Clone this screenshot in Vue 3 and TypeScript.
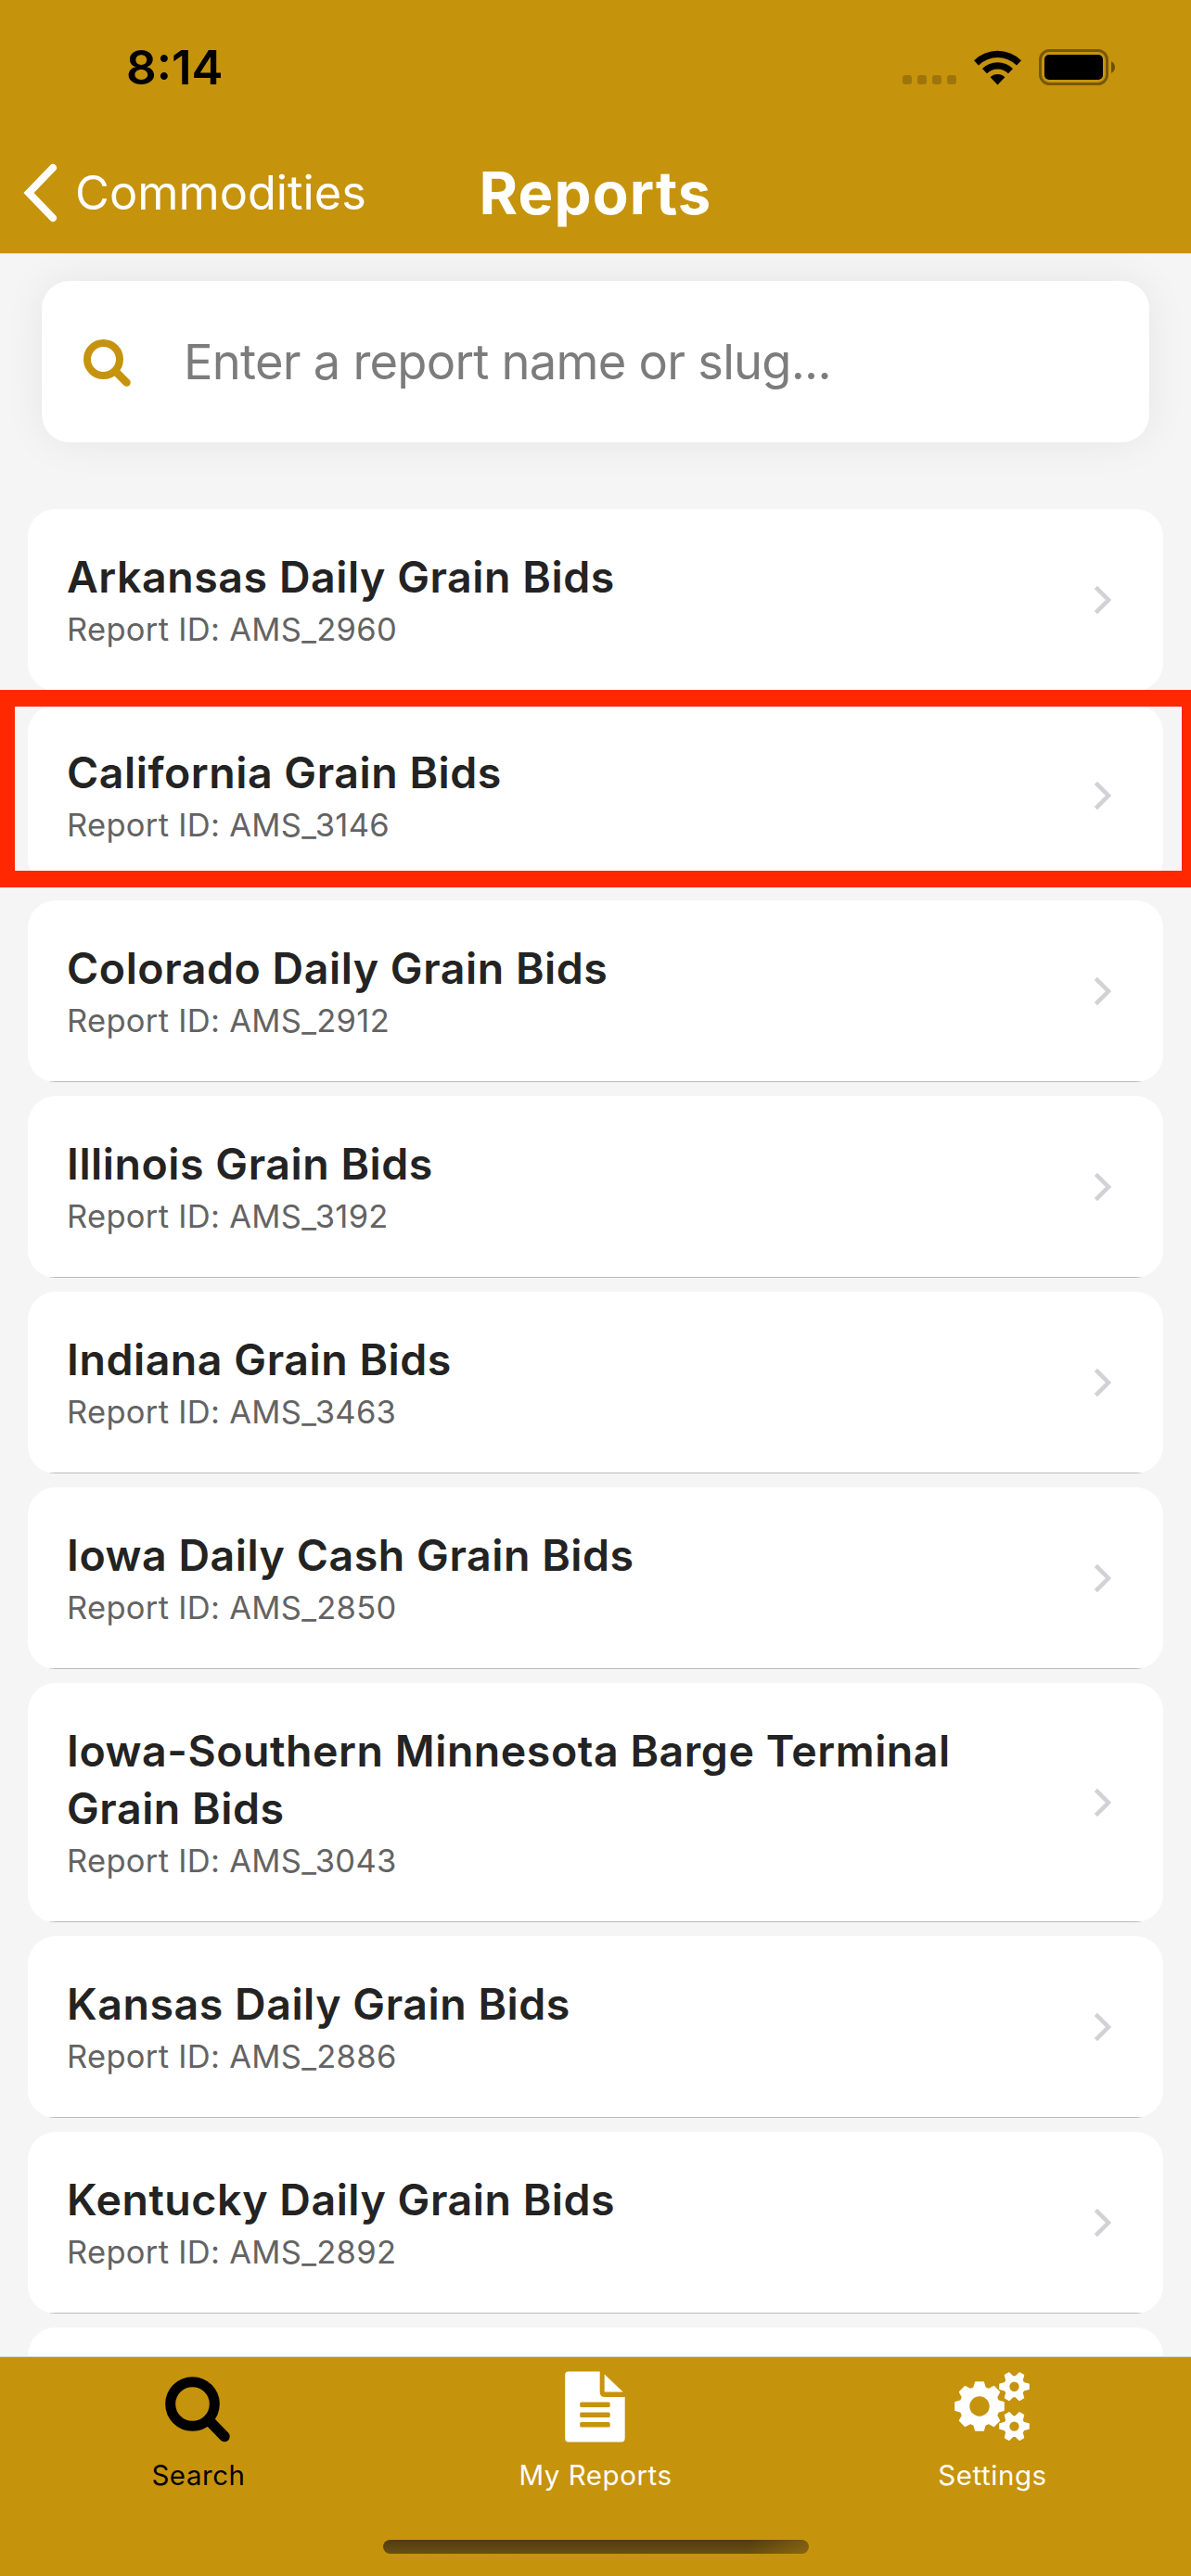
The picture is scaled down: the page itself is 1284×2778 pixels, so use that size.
<script setup lang="ts">
interface Report {
  name: string
  slug: string
  selected?: boolean
}

const reports: Report[] = [
  { name: 'Arkansas Daily Grain Bids', slug: 'AMS_2960' },
  { name: 'California Grain Bids', slug: 'AMS_3146', selected: true },
  { name: 'Colorado Daily Grain Bids', slug: 'AMS_2912' },
  { name: 'Illinois Grain Bids', slug: 'AMS_3192' },
  { name: 'Indiana Grain Bids', slug: 'AMS_3463' },
  { name: 'Iowa Daily Cash Grain Bids', slug: 'AMS_2850' },
  { name: 'Iowa-Southern Minnesota Barge Terminal Grain Bids', slug: 'AMS_3043' },
  { name: 'Kansas Daily Grain Bids', slug: 'AMS_2886' },
  { name: 'Kentucky Daily Grain Bids', slug: 'AMS_2892' },
]

/** Outline of a cog with a round hole; angles in radians, widths in pixels. */
function cog(
  cx: number,
  cy: number,
  outer: number,
  inner: number,
  hole: number,
  teeth: number,
  baseHalf: number,
  tipHalf: number,
): string {
  const points: string[] = []
  for (let i = 0; i < teeth; i++) {
    const a = (i * 2 * Math.PI) / teeth
    const corners = [
      [inner, -baseHalf],
      [outer, -tipHalf],
      [outer, tipHalf],
      [inner, baseHalf],
    ]
    for (const [r, t] of corners) {
      const x = cx + r * Math.cos(a) - t * Math.sin(a)
      const y = cy + r * Math.sin(a) + t * Math.cos(a)
      points.push(`${x.toFixed(2)} ${y.toFixed(2)}`)
    }
  }
  const ring = `M${cx - hole} ${cy}a${hole} ${hole} 0 1 0 ${hole * 2} 0a${hole} ${hole} 0 1 0 ${-hole * 2} 0Z`
  return `M${points.join('L')}Z${ring}`
}

const cogs: string[] = [
  cog(27, 45, 26, 20, 11.5, 8, 6, 4.2),
  cog(64.5, 23.7, 15.5, 10, 6, 6, 4, 2.5),
  cog(64.5, 66.6, 15.5, 10, 6, 6, 4, 2.5),
]
</script>

<template>
  <div class="screen">
    <header class="header">
      <div class="status">
        <span class="time">8:14</span>
        <div class="indicators">
          <div class="dots"><i v-for="n in 4" :key="n"></i></div>
          <svg class="wifi" width="51" height="38" viewBox="0 0 51 38">
            <path d="M0 11.2A36.5 36.5 0 0 1 51 11.2L46 16.4A29.2 29.2 0 0 0 5 16.4Z" />
            <path d="M9 20A23.6 23.6 0 0 1 42 20L37 25.2A16.4 16.4 0 0 0 14 25.2Z" />
            <path d="M17.6 29.3A11.2 11.2 0 0 1 33.4 29.3L25.5 37.5Z" />
          </svg>
          <svg class="battery" width="83" height="39" viewBox="0 0 83 39">
            <rect x="1.5" y="1.5" width="72" height="36" rx="10" fill="none" stroke="#000" stroke-opacity=".4" stroke-width="3" />
            <rect x="6" y="6" width="63" height="27" rx="5" />
            <path d="M78 13.3C80.5 14.3 82 16.7 82 19.5C82 22.3 80.5 24.7 78 25.7Z" fill-opacity=".45" />
          </svg>
        </div>
      </div>
      <nav class="nav">
        <div class="back">
          <svg width="38" height="64" viewBox="0 0 38 64">
            <path d="M33 5L7 32L33 59" fill="none" stroke="#fff" stroke-width="8" stroke-linecap="round" stroke-linejoin="miter" />
          </svg>
          <span>Commodities</span>
        </div>
        <h1>Reports</h1>
        <div class="side"></div>
      </nav>
    </header>

    <main class="content">
      <div class="search">
        <svg width="52" height="52" viewBox="0 0 52 52" fill="none" stroke="#c6930d">
          <circle cx="21.5" cy="21.5" r="17.5" stroke-width="8" />
          <path d="M35 35L46.5 46.5" stroke-width="8.5" stroke-linecap="round" />
        </svg>
        <span>Enter a report name or slug...</span>
      </div>

      <ul class="list">
        <li v-for="report in reports" :key="report.slug" class="item">
          <div class="card">
            <div class="text">
              <h2>{{ report.name }}</h2>
              <p>Report ID: {{ report.slug }}</p>
            </div>
            <svg width="20" height="32" viewBox="0 0 20 32">
              <path d="M2.4 2.4L16 16L2.4 29.6" fill="none" stroke="#d1d1d6" stroke-width="4.5" />
            </svg>
          </div>
          <div v-if="report.selected" class="highlight"></div>
        </li>
        <li class="item"><div class="card"></div></li>
      </ul>
    </main>

    <footer class="tabs">
      <div class="tab-row">
        <div class="tab active">
          <svg width="80" height="84" viewBox="0 0 80 84" fill="none" stroke="#000">
            <circle cx="33.5" cy="42.5" r="23.8" stroke-width="11" />
            <path d="M51.5 60.5L68 77.5" stroke-width="11.5" stroke-linecap="round" />
          </svg>
          <span>Search</span>
        </div>
        <div class="tab">
          <svg width="80" height="84" viewBox="0.8 0 80 84">
            <path
              fill="#fff"
              fill-rule="evenodd"
              d="M11.5 7.5H45.5V29.5Q45.5 35 51 35H72.5V79.5Q72.5 83.500 68.5 83.500H11.5Q8 83.500 8 79.5V11Q8 7.5 11.5 7.5ZM25.5 40.5Q24 40.5 24 42V44.5Q24 46 25.5 46H55Q56.5 46 56.5 44.5V42Q56.5 40.5 55 40.5ZM25.5 51.5Q24 51.5 24 53V55.5Q24 57 25.5 57H55Q56.5 57 56.5 55.5V53Q56.5 51.5 55 51.5ZM25.5 62Q24 62 24 63.5V66Q24 67.5 25.5 67.5H55Q56.5 67.5 56.5 66V63.5Q56.5 62 55 62Z"
            />
            <path fill="#fff" d="M50.5 10.5L70.5 29.5H50.5Z" />
          </svg>
          <span>My Reports</span>
        </div>
        <div class="tab">
          <svg width="82" height="84" viewBox="0 0 82 84">
            <path
              v-for="(d, i) in cogs"
              :key="i"
              :d="d"
              fill="#fff"
              fill-rule="evenodd"
              stroke="#fff"
              stroke-width="1.6"
              stroke-linejoin="round"
            />
          </svg>
          <span>Settings</span>
        </div>
      </div>
      <div class="home"></div>
    </footer>
  </div>
</template>

<style>
body {
  margin: 0;
}
</style>

<style scoped>
.screen {
  display: flex;
  flex-direction: column;
  width: 1284px;
  height: 2778px;
  overflow: hidden;
  background: #f5f5f5;
  font-family: Inter, 'Liberation Sans', sans-serif;
}

.header {
  flex: none;
  height: 273px;
  background: #c6930d;
  border-bottom: 1px solid #dcdcdc;
}

.status {
  display: flex;
  justify-content: space-between;
  height: 145px;
  padding: 0 81px 0 136px;
}

.time {
  margin-top: 42px;
  font-size: 51px;
  line-height: 62px;
  font-weight: 600;
}

.indicators {
  display: flex;
  align-items: flex-start;
}

.dots {
  display: flex;
  gap: 6px;
  margin-top: 81px;
}

.dots i {
  width: 10px;
  height: 10px;
  border-radius: 3px;
  background: rgba(0, 0, 0, 0.2);
}

.wifi {
  margin: 54px 0 0 19px;
}

.battery {
  margin: 53px 0 0 19px;
}

.nav {
  display: flex;
  align-items: center;
  height: 125px;
}

.back {
  flex: 1;
  display: flex;
  align-items: center;
  color: #fff;
  font-size: 50.5px;
}

.back svg {
  margin-left: 24px;
}

.back span {
  margin-left: 19px;
  line-height: 62px;
}

.nav h1 {
  margin: 0;
  color: #fff;
  font-size: 63.5px;
  line-height: 76px;
  font-weight: 700;
  letter-spacing: 1.1px;
}

.side {
  flex: 1;
}

.content {
  flex: 1;
  min-height: 0;
  overflow: hidden;
}

.search {
  display: flex;
  align-items: center;
  height: 174px;
  margin: 29px 45px 0;
  padding-left: 45px;
  box-sizing: border-box;
  border-radius: 30px;
  background: #fff;
  box-shadow: 0 0 45px rgba(0, 0, 0, 0.065);
  color: #7c7c7c;
}

.search svg {
  margin-top: 4px;
}

.search span {
  margin-left: 56px;
  font-size: 52.5px;
  letter-spacing: -0.78px;
  white-space: nowrap;
}

.list {
  display: flex;
  flex-direction: column;
  gap: 15px;
  margin: 72px 0 0;
  padding: 0 30px;
  list-style: none;
}

.item {
  position: relative;
}

.card {
  position: relative;
  display: flex;
  align-items: center;
  justify-content: space-between;
  min-height: 196px;
  padding: 42px 55px 42px 42px;
  box-sizing: border-box;
  border-radius: 30px;
  background: #fff;
  overflow: hidden;
}

.card::after {
  content: '';
  position: absolute;
  left: 0;
  right: 0;
  bottom: 0;
  height: 1px;
  background: #b9b9be;
}

.text {
  width: 1010px;
}

.text h2 {
  margin: 0;
  color: #232323;
  font-size: 46.5px;
  line-height: 62px;
  font-weight: 600;
  letter-spacing: 0.53px;
}

.text p {
  margin: 2px 0 1px;
  color: #636363;
  font-size: 34.5px;
  line-height: 47px;
  letter-spacing: 0.3px;
}

.highlight {
  position: absolute;
  left: -30px;
  right: -30px;
  top: -16px;
  height: 213px;
  box-sizing: border-box;
  border: solid #ff2800;
  border-width: 18px 10px 18px 16px;
}

.tabs {
  flex: none;
  height: 236px;
  border-top: 1px solid #d4d6d8;
  background: #c6930d;
}

.tab-row {
  display: flex;
}

.tab {
  flex: 1;
  display: flex;
  flex-direction: column;
  align-items: center;
  padding-top: 8px;
  color: #fff;
}

.tab svg {
  display: block;
}

.tab span {
  margin-top: 17px;
  font-size: 29.5px;
  line-height: 36px;
  letter-spacing: 0.55px;
}

.tab.active {
  color: #000;
}

.home {
  width: 459px;
  height: 15px;
  margin: 52px auto 0;
  border-radius: 8px;
  background:
    linear-gradient(to right, transparent 86%, rgba(198, 147, 13, 0.35)),
    linear-gradient(#4f3c12, #6b4f11);
}
</style>
